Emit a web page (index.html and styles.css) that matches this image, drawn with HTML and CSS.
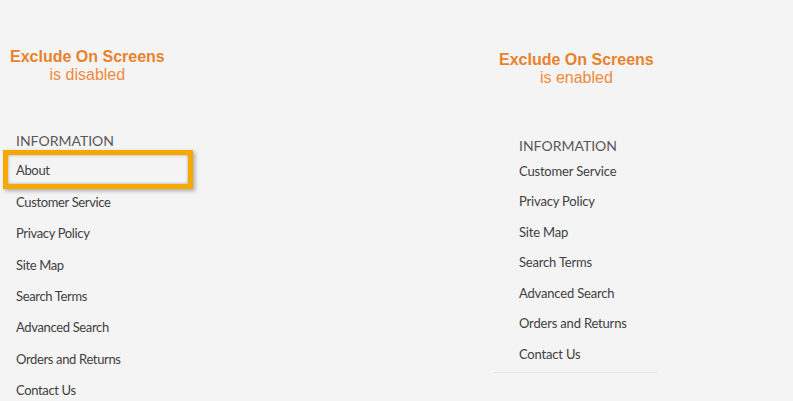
FILE: index.html
```html
<!DOCTYPE html>
<html lang="en">

<head>
    <meta charset="UTF-8">
    <meta name="viewport" content="width=device-width, initial-scale=1.0">
    <title>Exclude On Screens</title>
    <link rel="stylesheet" href="styles.css">
</head>

<body>
    <div class="page">
        <div class="col col-disabled">
            <div class="note">
                <strong>Exclude On Screens</strong>
                <span>is disabled</span>
            </div>
            <div class="links">
                <h3>Information</h3>
                <ul>
                    <li class="highlight"><a href="#">About</a></li>
                    <li><a href="#">Customer Service</a></li>
                    <li><a href="#">Privacy Policy</a></li>
                    <li><a href="#">Site Map</a></li>
                    <li><a href="#">Search Terms</a></li>
                    <li><a href="#">Advanced Search</a></li>
                    <li><a href="#">Orders and Returns</a></li>
                    <li><a href="#">Contact Us</a></li>
                </ul>
            </div>
        </div>
        <div class="col col-enabled">
            <div class="note">
                <strong>Exclude On Screens</strong>
                <span>is enabled</span>
            </div>
            <div class="links">
                <h3>Information</h3>
                <ul>
                    <li><a href="#">Customer Service</a></li>
                    <li><a href="#">Privacy Policy</a></li>
                    <li><a href="#">Site Map</a></li>
                    <li><a href="#">Search Terms</a></li>
                    <li><a href="#">Advanced Search</a></li>
                    <li><a href="#">Orders and Returns</a></li>
                    <li><a href="#">Contact Us</a></li>
                </ul>
            </div>
        </div>
    </div>
</body>

</html>
```

FILE: styles.css
```css
body {
    margin: 0;
    padding: 0;
    background-color: #f4f4f4;
    font-family: Lato, "Open Sans", sans-serif;
    overflow: hidden;
}

.page {
    display: flex;
    height: 401px;
}

.col-disabled {
    flex: none;
    width: 493px;
}

.col-enabled {
    flex: 1;
}

.note {
    display: inline-flex;
    flex-direction: column;
    align-items: center;
    font-family: "Liberation Sans", Arial, sans-serif;
    font-size: 16px;
    line-height: 18px;
}

.note strong {
    color: #e8822a;
}

.note span {
    color: #f0893b;
}

.col-disabled .note {
    margin: 48px 0 0 10px;
}

.col-enabled .note {
    margin: 51px 0 0 6px;
}

.links h3 {
    margin: 0;
    font-size: 14px;
    line-height: 20px;
    font-weight: normal;
    text-transform: uppercase;
    color: #585858;
}

.links ul {
    list-style: none;
    margin: 0;
    padding: 0;
}

.links li {
    font-size: 13px;
}

.links a {
    color: #3e3e3e;
    text-decoration: none;
}

.col-disabled .links {
    margin-top: 46.6px;
    padding-left: 16px;
}

.col-disabled .links ul {
    margin-top: 4.7px;
}

.col-disabled .links li {
    line-height: 31.4px;
    letter-spacing: -0.35px;
}

.col-enabled .links {
    margin-top: 48.6px;
    width: 138px;
    padding: 0 0 2.5px 26px;
    border-bottom: 1px solid #e6e6e6;
}

.col-enabled .links li {
    line-height: 30.5px;
    letter-spacing: -0.18px;
}

.highlight {
    position: relative;
}

.highlight::after {
    content: '';
    position: absolute;
    left: -13px;
    top: -5.3px;
    width: 180px;
    height: 29px;
    border: 5px solid #f7a800;
    box-shadow: 2px 2px 4px rgba(0, 0, 0, 0.3), inset 0 0 3px rgba(0, 0, 0, 0.35);
}
```
